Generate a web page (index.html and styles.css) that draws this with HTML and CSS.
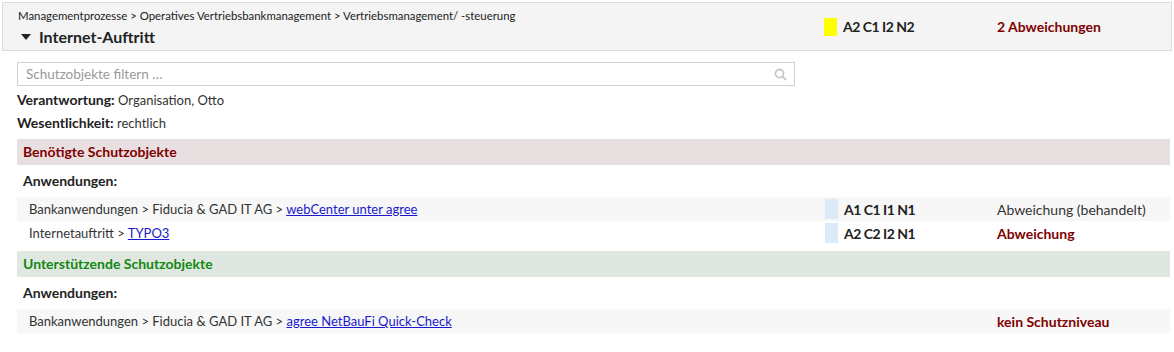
FILE: index.html
```html
<!DOCTYPE html>
<html lang="de">
<head>
<meta charset="utf-8">
<title>Internet-Auftritt</title>
<link rel="stylesheet" href="styles.css">
</head>
<body>
<div class="page">
  <header class="head">
    <div class="head-main">
      <div class="crumbs">Managementprozesse &gt; Operatives Vertriebsbankmanagement &gt; Vertriebsmanagement/ -steuerung</div>
      <div class="title"><span class="caret"></span>Internet-Auftritt</div>
    </div>
    <div class="head-level"><span class="swatch swatch-yellow"></span><span class="level">A2 C1 I2 N2</span></div>
    <div class="head-status">2 Abweichungen</div>
  </header>

  <div class="content">
    <div class="search">
      <span class="placeholder">Schutzobjekte filtern …</span>
      <svg class="search-icon" width="13" height="13" viewBox="0 0 13 13"><circle cx="5.5" cy="5.5" r="4" fill="none" stroke="#c8c8c8" stroke-width="1.8"/><line x1="8.5" y1="8.5" x2="12" y2="12" stroke="#c8c8c8" stroke-width="2"/></svg>
    </div>
    <div class="meta"><b>Verantwortung:</b>&nbsp;<span>Organisation, Otto</span></div>
    <div class="meta"><b>Wesentlichkeit:</b>&nbsp;<span>rechtlich</span></div>

    <div class="band band-red">Benötigte Schutzobjekte</div>
    <div class="group">Anwendungen:</div>
    <div class="row row-alt">
      <div class="path">Bankanwendungen &gt; Fiducia &amp; GAD IT AG &gt; <a href="#">webCenter unter agree</a></div>
      <div class="lvl"><span class="swatch swatch-blue"></span><span class="level">A1 C1 I1 N1</span></div>
      <div class="status">Abweichung (behandelt)</div>
    </div>
    <div class="row">
      <div class="path">Internetauftritt &gt; <a href="#">TYPO3</a></div>
      <div class="lvl"><span class="swatch swatch-blue"></span><span class="level">A2 C2 I2 N1</span></div>
      <div class="status status-bad">Abweichung</div>
    </div>

    <div class="band band-green">Unterstützende Schutzobjekte</div>
    <div class="group">Anwendungen:</div>
    <div class="row row-alt">
      <div class="path">Bankanwendungen &gt; Fiducia &amp; GAD IT AG &gt; <a href="#">agree NetBauFi Quick-Check</a></div>
      <div class="lvl"></div>
      <div class="status status-bad">kein Schutzniveau</div>
    </div>
  </div>
</div>
</body>
</html>
```
FILE: styles.css
```css
* { box-sizing: border-box; }
html, body { margin: 0; padding: 0; background: #fff; }
body {
  font-family: "Lato", "Liberation Sans", sans-serif;
  font-size: 13px;
  color: #333;
}
.page { padding: 2px 2px 0 2px; }

.head {
  display: flex;
  align-items: center;
  height: 49px;
  background: #f4f4f4;
  border: 1px solid #dcdcdc;
}
.head-main { align-self: flex-start; width: 821px; padding-left: 15px; padding-top: 6px; }
.crumbs { font-size: 11.4px; line-height: 14px; color: #222; }
.title {
  display: flex;
  align-items: center;
  margin-top: 3px;
  font-size: 16px;
  font-weight: 700;
  color: #222;
  line-height: 22px;
  padding-left: 3px;
}
.caret {
  width: 0; height: 0;
  border-left: 5px solid transparent;
  border-right: 5px solid transparent;
  border-top: 6px solid #222;
  margin-right: 8px;
}
.head-level { display: flex; align-items: center; width: 173px; }
.head-status { font-size: 14px; font-weight: 700; color: #800000; }

.swatch { display: inline-block; width: 13px; margin-right: 6px; }
.swatch-yellow { height: 18px; background: #ffff00; }
.swatch-blue { height: 20px; background: #dbe9f8; }
.level { font-size: 14px; font-weight: 700; color: #222; letter-spacing: -0.5px; }

.content { padding: 0 2px 0 15px; }

.search {
  display: flex;
  align-items: center;
  justify-content: space-between;
  width: 778px;
  height: 24px;
  margin-top: 11px;
  border: 1px solid #cfcfcf;
  padding: 0 7px 0 8px;
}
.placeholder { color: #999; font-size: 13.5px; }
.meta { display: flex; align-items: baseline; height: 23px; line-height: 23px; }
.search + .meta { margin-top: 2px; }
.meta b { font-size: 14px; color: #222; }

.band {
  height: 26px;
  line-height: 26px;
  padding-left: 6px;
  font-size: 14px;
  font-weight: 700;
  margin-top: 5px;
}
.band-red { background: #e8dfe0; color: #800000; }
.band-green { background: #e0e7e0; color: #118811; margin-top: 6px; }

.group { height: 32px; line-height: 32px; padding-left: 6px; font-size: 14px; font-weight: 700; color: #222; }

.row { display: flex; align-items: center; height: 24px; }
.row-alt { background: #f7f7f7; }
.path { width: 808px; padding-left: 12px; }
.path a { color: #1a1acc; }
.lvl { display: flex; align-items: center; width: 172px; }
.status { font-size: 14px; color: #333; }
.status-bad { color: #800000; font-weight: 700; }
```
